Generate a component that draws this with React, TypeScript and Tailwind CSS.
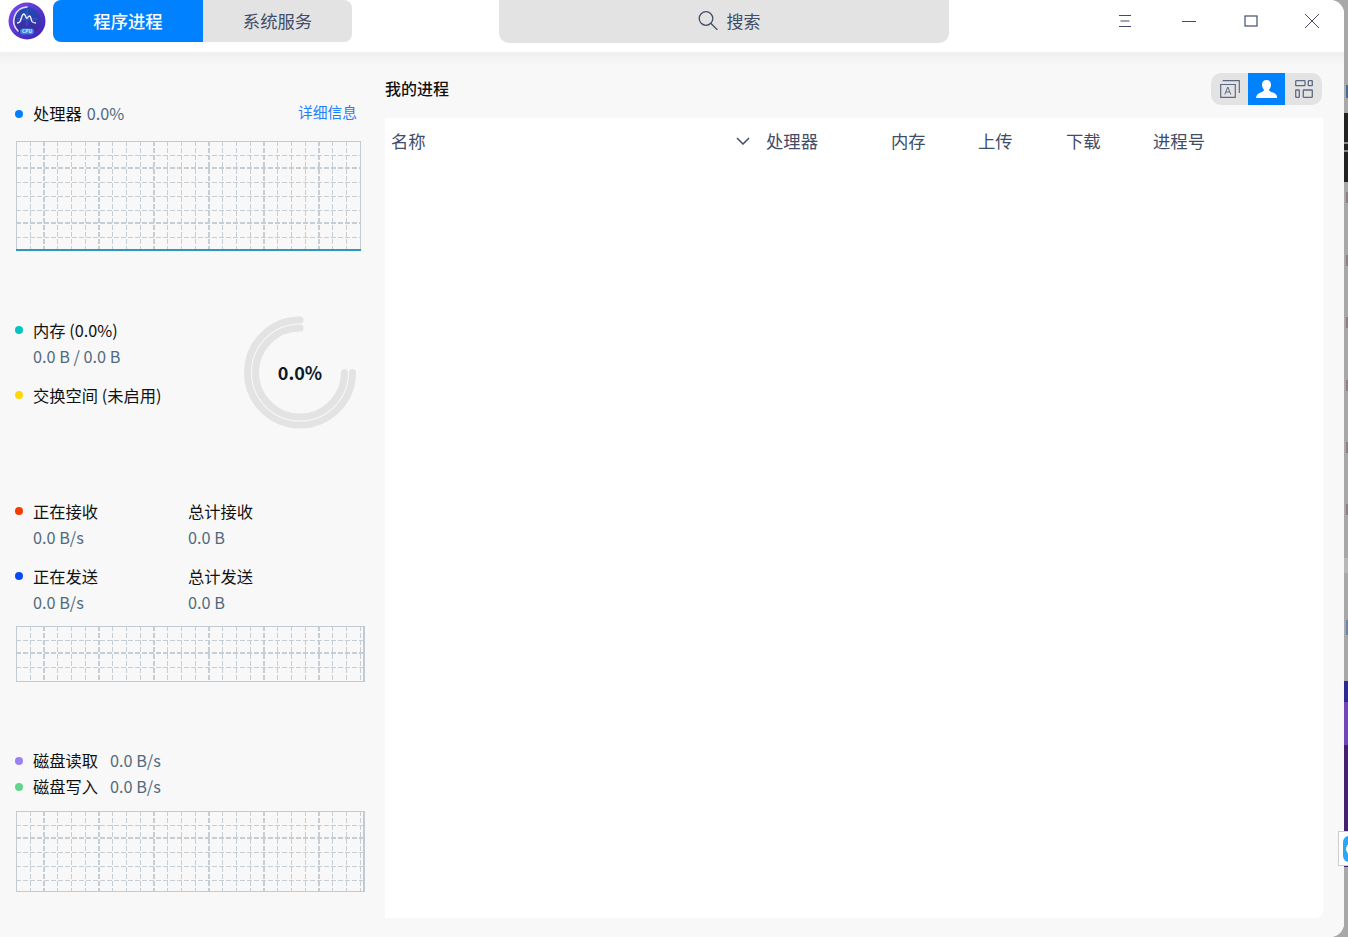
const font = { fontFamily: '"Noto Sans CJK SC", "Noto Sans", sans-serif' };

function Grid({ width, height, right }: { width: number; height: number; right?: boolean }) {
    const xs: number[] = [];
    for (let i = 1; i * 13.75 < width - 1; i++) xs.push(i);
    const ys: number[] = [];
    for (let i = 1; i * 13.72 < height - 1; i++) ys.push(i);
    return (
        <svg width={width} height={height} className="block shrink-0" shapeRendering="crispEdges">
            {xs.map((i) => {
                const thick = i % 4 === 2;
                const x = Math.round(i * 13.75);
                return (
                    <line
                        key={i}
                        x1={thick ? x : x + 0.5}
                        x2={thick ? x : x + 0.5}
                        y1="0"
                        y2={height}
                        stroke="#c6ced5"
                        strokeWidth={thick ? 2 : 1}
                        strokeDasharray="5 2"
                    />
                );
            })}
            {ys.map((i) => {
                const thick = i % 4 === 2;
                const y = Math.round(i * 13.72);
                return (
                    <line
                        key={i}
                        x1="0"
                        x2={width}
                        y1={thick ? y : y + 0.5}
                        y2={thick ? y : y + 0.5}
                        stroke="#c6ced5"
                        strokeWidth={thick ? 2 : 1}
                        strokeDasharray="5 2"
                    />
                );
            })}
            <rect x="0.5" y="0.5" width={width - 1} height={height - 1} fill="none" stroke="#c3cbd2" />
            {right && <rect x={width - 2} y="0" width="2" height={height} fill="#c3cbd2" />}
        </svg>
    );
}

function Dot({ color }: { color: string }) {
    return <span className={`w-2 h-2 rounded-full shrink-0 -ml-[1px] ${color}`} />;
}

function Logo() {
    return (
        <svg width="38" height="38" viewBox="0 0 38 38" className="shrink-0">
            <defs>
                <linearGradient id="logoRing" x1="0" y1="0" x2="1" y2="1">
                    <stop offset="0" stopColor="#7a4cf0" />
                    <stop offset="1" stopColor="#3a1fb0" />
                </linearGradient>
                <linearGradient id="logoFace" x1="0" y1="0" x2="0" y2="1">
                    <stop offset="0" stopColor="#1d4fb5" />
                    <stop offset="1" stopColor="#4a1fa0" />
                </linearGradient>
            </defs>
            <circle cx="19" cy="19" r="18.5" fill="url(#logoRing)" />
            <circle cx="19" cy="19" r="14" fill="url(#logoFace)" />
            <path d="M10 29A14 14 0 0 1 19 5" fill="none" stroke="#e4e0fa" strokeWidth="1.6" strokeLinecap="round" />
            <path d="M19 7v17M9 17h20" stroke="#3f78d8" strokeWidth="0.6" />
            <path d="M9 21c3 0 3.500-2 4.500-5.500S15 12 16 12s1.500 3 2.500 4 1.500-2 3-2 1.500 4 2.500 5.500 2 1.500 4 1.500" fill="none" stroke="#f4f7ff" strokeWidth="1.300" />
            <rect x="12" y="26.500" width="14" height="6" rx="3" fill="#2f86e6" />
            <text x="19" y="31.400" textAnchor="middle" fontSize="4.800" fontWeight="700" fill="#d8ecff">CPU</text>
        </svg>
    );
}

export default function App() {
    return (
        <div className="relative flex h-[937px] w-[1348px] overflow-hidden bg-[#a8a8a8]" style={font}>
            <div className="flex h-full w-[1344px] flex-col overflow-hidden rounded-br-[14px] rounded-tr-[14px] bg-[#f8f8f8]">
                <header className="flex h-[52px] shrink-0 items-start bg-white">
                    <div className="ml-[8px] mt-[2px]">
                        <Logo />
                    </div>
                    <div className="ml-[7px] flex h-[42px] w-[299px] text-[17.330px]">
                        <div className="flex w-[150px] items-center justify-center rounded-bl-[8px] rounded-tl-[8px] bg-[#0081ff] font-medium text-white">
                            程序进程
                        </div>
                        <div className="flex w-[149px] items-center justify-center rounded-br-[8px] rounded-tr-[8px] bg-[#e3e3e3] text-[#414d68]">
                            系统服务
                        </div>
                    </div>
                    <div className="ml-[147px] flex h-[43px] w-[450px] items-center justify-center gap-[9px] rounded-b-[10px] bg-[#e3e3e3] pb-[2px] pl-[10px] text-[17px] text-[#414d68]">
                        <svg width="20" height="19" viewBox="0 0 20 19" fill="none" stroke="currentColor" strokeWidth="1.300">
                            <circle cx="8" cy="7.500" r="6.800" />
                            <path d="M13 12.500l6 6" strokeLinecap="round" />
                        </svg>
                        <span>搜索</span>
                    </div>
                    <div className="ml-[169px] flex h-[42px] items-center text-[#414d68]">
                        <svg width="14" height="14" viewBox="0 0 14 14" stroke="currentColor" className="mr-[49px]">
                            <path d="M1 1.500h12M2.500 7h9M1 12.500h12" fill="none" />
                        </svg>
                        <svg width="16" height="14" viewBox="0 0 16 14" stroke="currentColor" className="mr-[47px]">
                            <path d="M1 7.500h14" fill="none" />
                        </svg>
                        <svg width="14" height="14" viewBox="0 0 14 14" stroke="currentColor" strokeWidth="1.200" className="mr-[46px]">
                            <rect x="1" y="2" width="12" height="10" fill="none" />
                        </svg>
                        <svg width="16" height="16" viewBox="0 0 16 16" stroke="currentColor">
                            <path d="M1 1l14 14M15 1L1 15" fill="none" />
                        </svg>
                    </div>
                </header>

                <div className="flex min-h-0 flex-1 bg-gradient-to-b from-[#efefef] to-[#f8f8f8] to-[14px]">
                    <aside className="flex w-[385px] shrink-0 flex-col pl-[16px] text-[16.250px] leading-[26px]">
                        <div className="mt-[49px] flex h-[26px] items-center">
                            <Dot color="bg-[#0081ff]" />
                            <span className="ml-[10px] -mt-[2px] text-[#111]">处理器</span>
                            <span className="ml-[5px] -mt-[2px] text-[#526a7f]">0.0%</span>
                            <span className="ml-auto mr-[28px] -mt-[5px] text-[14.750px] text-[#1f7fff]">详细信息</span>
                        </div>
                        <div className="relative mt-[14px] h-[110px] w-[345px]">
                            <Grid width={345} height={110} />
                            <div className="absolute bottom-0 left-0 h-[2px] w-full bg-[#2b9ab8]" />
                        </div>

                        <div className="mt-[65px] flex h-[114px]">
                            <div className="w-[228px]">
                                <div className="mt-[1px] flex h-[26px] items-center">
                                    <Dot color="bg-[#00c5c0]" />
                                    <span className="ml-[10px] text-[#111]">内存 (0.0%)</span>
                                </div>
                                <div className="pl-[17px] text-[#526a7f]">0.0 B / 0.0 B</div>
                                <div className="mt-[13px] flex h-[26px] items-center">
                                    <Dot color="bg-[#fed70a]" />
                                    <span className="ml-[10px] text-[#111]">交换空间 (未启用)</span>
                                </div>
                            </div>
                            <div className="relative h-[114px] w-[114px] -ml-[1px]">
                                <svg width="114" height="114" viewBox="0 0 114 114" fill="none" stroke="#e3e3e3" strokeLinecap="round">
                                    <path d="M57 4A52.500 52.500 0 1 0 109.500 56.500" strokeWidth="7" />
                                    <path d="M57 12A44.500 44.500 0 1 0 101.500 56.500" strokeWidth="7" />
                                </svg>
                                <div className="absolute inset-0 flex items-center justify-center pb-[3px] text-[18px] font-semibold text-[#0b1a2a]">
                                    0.0%
                                </div>
                            </div>
                        </div>

                        <div className="mt-[68px] flex">
                            <div className="w-[172px]">
                                <div className="flex h-[26px] items-center">
                                    <Dot color="bg-[#f23c00]" />
                                    <span className="ml-[10px] text-[#111]">正在接收</span>
                                </div>
                                <div className="pl-[17px] text-[#526a7f]">0.0 B/s</div>
                            </div>
                            <div>
                                <div className="text-[#111]">总计接收</div>
                                <div className="text-[#526a7f]">0.0 B</div>
                            </div>
                        </div>
                        <div className="mt-[13px] flex">
                            <div className="w-[172px]">
                                <div className="flex h-[26px] items-center">
                                    <Dot color="bg-[#0a4af5]" />
                                    <span className="ml-[10px] text-[#111]">正在发送</span>
                                </div>
                                <div className="pl-[17px] text-[#526a7f]">0.0 B/s</div>
                            </div>
                            <div>
                                <div className="text-[#111]">总计发送</div>
                                <div className="text-[#526a7f]">0.0 B</div>
                            </div>
                        </div>
                        <div className="mt-[11px]">
                            <Grid width={349} height={56} right />
                        </div>

                        <div className="mt-[66px] flex h-[26px] items-center">
                            <Dot color="bg-[#9a82f5]" />
                            <span className="ml-[10px] -mt-[2px] text-[#111]">磁盘读取</span>
                            <span className="ml-[12px] -mt-[2px] text-[#526a7f]">0.0 B/s</span>
                        </div>
                        <div className="flex h-[26px] items-center">
                            <Dot color="bg-[#63d58a]" />
                            <span className="ml-[10px] -mt-[2px] text-[#111]">磁盘写入</span>
                            <span className="ml-[12px] -mt-[2px] text-[#526a7f]">0.0 B/s</span>
                        </div>
                        <div className="mt-[11px]">
                            <Grid width={349} height={81} right />
                        </div>
                    </aside>

                    <main className="flex w-[938px] shrink-0 flex-col">
                        <div className="mt-[21px] flex h-[32px] items-center justify-between">
                            <span className="-mt-[2px] text-[16px] font-medium text-[#111]">我的进程</span>
                            <div className="mr-[1px] flex h-[32px] w-[111px] overflow-hidden rounded-[10px] bg-[#e3e3e3] text-[#5d6a80]">
                                <div className="flex w-[37px] items-center justify-center">
                                    <svg width="20" height="18" viewBox="0 0 20 18" fill="none" stroke="currentColor" strokeWidth="1.200">
                                        <path d="M.7 4.500h14.600v12.800H.7zM2.600.7H19.300V13" />
                                        <path d="M4.800 14.500l3-7.500 3 7.500M5.800 12h4" strokeWidth="1" />
                                    </svg>
                                </div>
                                <div className="flex w-[37px] items-center justify-center bg-[#0081ff]">
                                    <svg width="21" height="18" viewBox="0 0 21 18" fill="white">
                                        <path d="M10.500 0c2.900 0 4.500 2 4.500 4.800 0 2.300-1 4-2 5 0 1.400 1.900 1.900 3.900 2.700 2.100.8 4.100 2 4.600 5.500H0c.5-3.500 2.500-4.700 4.600-5.500C6.600 11.700 8 11.200 8 9.800c-1-1-2-2.700-2-5C6 2 7.600 0 10.500 0z" />
                                    </svg>
                                </div>
                                <div className="flex w-[37px] items-center justify-center">
                                    <svg width="18" height="18" viewBox="0 0 18 18" fill="none" stroke="currentColor" strokeWidth="1.300">
                                        <rect x="0.700" y="0.700" width="9.300" height="5" rx="0.500" />
                                        <rect x="13.300" y="0.700" width="4" height="5" rx="0.500" />
                                        <rect x="0.700" y="10" width="3.600" height="7.300" rx="0.500" />
                                        <rect x="8.300" y="10" width="9" height="7.300" rx="0.500" />
                                    </svg>
                                </div>
                            </div>
                        </div>
                        <div className="mt-[13px] mb-[19px] flex-1 rounded-br-[8px] bg-white">
                            <div className="flex h-[45px] items-center text-[17.330px] text-[#414d68]">
                                <span className="ml-[6px] w-[345px]">名称</span>
                                <svg width="14" height="8" viewBox="0 0 14 8" fill="none" stroke="currentColor" strokeWidth="1.500" className="mr-[16px]">
                                    <path d="M1 1l6 6 6-6" />
                                </svg>
                                <span className="w-[125px]">处理器</span>
                                <span className="w-[87px]">内存</span>
                                <span className="w-[88px]">上传</span>
                                <span className="w-[87px]">下载</span>
                                <span>进程号</span>
                            </div>
                        </div>
                    </main>
                </div>
            </div>

            {/* desktop showing behind the window */}
            <div className="absolute right-0 top-[85px] h-[13px] w-[2px] bg-[#4a6a9a]" />
            <div className="absolute right-0 top-[113px] h-[69px] w-[4px] bg-[#222]" />
            <div className="absolute right-0 top-[142px] h-[2px] w-[4px] bg-[#8a8a8a]" />
            <div className="absolute right-0 top-[150px] h-[2px] w-[4px] bg-[#8a8a8a]" />
            {[192, 255, 317, 380, 442, 504].map((y) => (
                <div key={y} className="absolute right-0 h-[11px] w-[2px] bg-[#8f8086]" style={{ top: y }} />
            ))}
            <div className="absolute right-0 top-[558px] h-[15px] w-[4px] bg-[#b8b8b8]" />
            <div className="absolute right-0 top-[620px] h-[15px] w-[2px] bg-[#6d86a8]" />
            <div className="absolute right-0 top-[681px] h-[21px] w-[4px] bg-[#2f2a8f]" />
            <div className="absolute right-0 top-[702px] h-[43px] w-[4px] bg-[#7346b8]" />
            <div className="absolute right-0 top-[745px] h-[122px] w-[4px] bg-[#45206f]" />
            <div className="absolute right-0 top-[831px] flex h-[35px] w-[10px] items-center border border-r-0 border-[#ccc] bg-white pl-[4px]">
                <div className="relative h-[26px] w-[12px] shrink-0 rounded-l-[6px] bg-[#2aa8f5]">
                    <div className="absolute left-[3px] top-[7px] h-[12px] w-[6px] rounded-l-full bg-white" />
                </div>
            </div>
        </div>
    );
}
